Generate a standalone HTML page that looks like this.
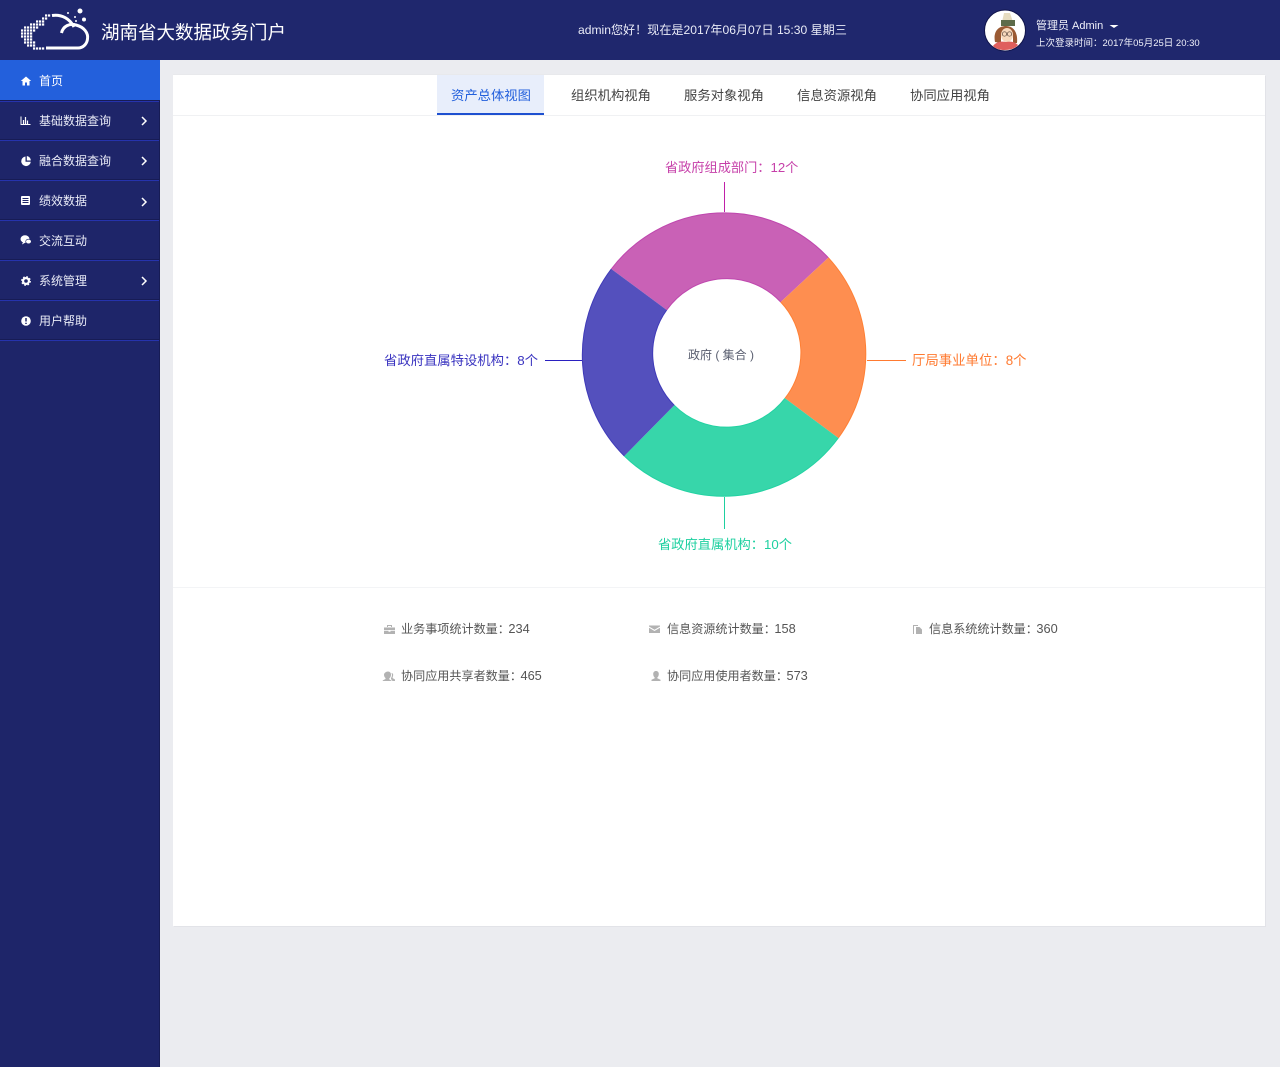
<!DOCTYPE html>
<html lang="zh-CN">
<head>
<meta charset="utf-8">
<title>湖南省大数据政务门户</title>
<style>
html,body{margin:0;padding:0;width:1280px;height:1067px;overflow:hidden;background:#ebecf0}
body{position:relative;font-family:"Liberation Sans","Noto Sans CJK SC",sans-serif}
.b{position:absolute}
.t{position:absolute;white-space:nowrap;line-height:20px;height:20px}
.n{color:#e9ebf7;font-size:12px}
.tab{color:#444;font-size:13.33px}
.s{color:#555;font-size:12.1px}
.d{margin-left:-1.5px;font-size:12.8px}
.l{font-size:13.33px}
svg{position:absolute;left:0;top:0}
</style>
</head>
<body>
<div class="b" style="left:0;top:0;width:1280px;height:60px;background:#1f276d"></div>
<div class="b" style="left:0;top:60px;width:159px;height:1007px;background:#1e2569;border-right:1px solid #171c55"></div>
<div class="b" style="left:0;top:60px;width:160px;height:39.500px;background:#2360dc"></div>
<div class="b" style="left:0;top:99.500px;width:159px;height:1px;background:#171c55"></div><div class="b" style="left:0;top:100.500px;width:159px;height:1px;background:#2633ad"></div>
<div class="b" style="left:0;top:139px;width:159px;height:1px;background:#171c55"></div><div class="b" style="left:0;top:140px;width:159px;height:1px;background:#2633ad"></div>
<div class="b" style="left:0;top:179px;width:159px;height:1px;background:#171c55"></div><div class="b" style="left:0;top:180px;width:159px;height:1px;background:#2633ad"></div>
<div class="b" style="left:0;top:219px;width:159px;height:1px;background:#171c55"></div><div class="b" style="left:0;top:220px;width:159px;height:1px;background:#2633ad"></div>
<div class="b" style="left:0;top:259px;width:159px;height:1px;background:#171c55"></div><div class="b" style="left:0;top:260px;width:159px;height:1px;background:#2633ad"></div>
<div class="b" style="left:0;top:299px;width:159px;height:1px;background:#171c55"></div><div class="b" style="left:0;top:300px;width:159px;height:1px;background:#2633ad"></div>
<div class="b" style="left:0;top:339px;width:159px;height:1px;background:#171c55"></div><div class="b" style="left:0;top:340px;width:159px;height:1px;background:#2633ad"></div>

<div class="b" style="left:173px;top:75px;width:1092px;height:851px;background:#fff;box-shadow:1px 1px 0 #e2e3e8,0 -1px 0 #e8e9ec"></div>
<div class="b" style="left:173px;top:115px;width:1092px;height:1px;background:#f0f1f3"></div>
<div class="b" style="left:437px;top:75px;width:107px;height:38px;background:#e8eefb;border-bottom:2px solid #1e50d0"></div>
<div class="b" style="left:173px;top:587px;width:1092px;height:1px;background:#f3f4f6"></div>

<svg width="1280" height="1067" viewBox="0 0 1280 1067" fill="none">
  <!-- logo -->
  <path d="M45 15.500h6M42 18.500h6M36 21.500h9M30 24.500h15M24 27.500h15M21 30.500h15M21 33.500h12M21 36.500h12M24 39.500h9M24 42.500h12M27 45.500h9M33 48.500h12" stroke="#fff" stroke-width="2.200" stroke-dasharray="2.200 .8"/>
  <path d="M52 15.500C62 14 70 19 74 27M61.500 33C63 26 70 23 76 25C84 27 88.500 33 87.500 39C87 44 83 48 78 48L46 48" stroke="#fff" stroke-width="3"/>
  <circle cx="80" cy="11" r="2.500" fill="#fff"/><circle cx="84" cy="19.500" r="2" fill="#fff"/><circle cx="75" cy="17" r="1" fill="#fff"/><circle cx="68" cy="13" r="1" fill="#fff"/><circle cx="76" cy="21" r="1" fill="#fff"/>
  <!-- avatar -->
  <circle cx="1005" cy="30.500" r="20.500" fill="#fff" stroke="#10144a" stroke-width="1"/>
  <path d="M1002 22L1004 13H1010L1013 22Z" fill="#e6dcc0"/>
  <path d="M1001 20h14v6h-14z" fill="#5d6b4a"/>
  <path d="M995 42C993 32 998 26 1006 26C1014 26 1018 33 1017 43L1013 43V36H1001V43Z" fill="#9a5a34"/>
  <ellipse cx="1007" cy="35" rx="6" ry="7" fill="#f7d9bd"/>
  <circle cx="1004.500" cy="34" r="2.200" stroke="#55433a" stroke-width=".7"/><circle cx="1009.500" cy="34" r="2.200" stroke="#55433a" stroke-width=".7"/>
  <path d="M993 46C996 42 1001 41 1006 42C1011 41 1015 42 1018 45C1014 51 998 52 993 46Z" fill="#df5f5d"/>
  <!-- caret -->
  <path d="M1109.500 25h9l-4.500 3z" fill="#fff"/>
  <!-- nav icons -->
  <path d="M26 76.500L20.800 81H22.500V85.500H25V82.500H27V85.500H29.500V81H31.200Z" fill="#fff"/>
  <path d="M21 116.500V124.500H30.500" stroke="#fff" stroke-width="1"/><path d="M23.500 120v4M25.500 117v7M27.500 120.500v3.500" stroke="#fff" stroke-width="1.200"/>
  <path d="M25.500 156.500A4.800 4.800 0 1 0 30.800 161.800H25.500Z" fill="#fff"/><path d="M26.800 156A4.500 4.500 0 0 1 30.800 160.500H26.800Z" fill="#fff"/>
  <rect x="21" y="196" width="9" height="9" rx="1" fill="#fff"/><path d="M22.500 198.500h6M22.500 200.500h6M22.500 202.500h6" stroke="#1e2569" stroke-width=".9"/>
  <ellipse cx="25" cy="239" rx="4.500" ry="3.800" fill="#fff"/><path d="M23 242L22 244.500L25.500 242.500Z" fill="#fff"/><ellipse cx="28.500" cy="241.500" rx="2.800" ry="2.300" fill="#fff" stroke="#1e2569" stroke-width=".6"/>
  <circle cx="26" cy="281" r="2.900" stroke="#fff" stroke-width="2.200"/><circle cx="26" cy="281" r="4.300" stroke="#fff" stroke-width="1.200" stroke-dasharray="1.700 1.700"/>
  <circle cx="26" cy="321" r="4.800" fill="#fff"/><path d="M26 318v3.500M26 322.700v1.300" stroke="#1e2569" stroke-width="1.500"/>
  <path d="M142 117l4 4-4 4M142 157l4 4-4 4M142 198l4 4-4 4M142 277l4 4-4 4" stroke="#fff" stroke-width="1.500"/>
  <!-- donut -->
  <path d="M611.300 269A142.300 142.300 0 0 1 828.300 257.700L780.700 302A73.500 73.500 0 0 0 666.700 310Z" fill="#c961b6"/>
  <path d="M828.300 257.700A142.300 142.300 0 0 1 838.300 438L785 398.300A73.500 73.500 0 0 0 780.700 302Z" fill="#fe8e50"/>
  <path d="M838.300 438A142.300 142.300 0 0 1 624.300 456L674.300 405.300A73.500 73.500 0 0 0 785 398.300Z" fill="#37d6aa"/>
  <path d="M624.300 456A142.300 142.300 0 0 1 611.300 269L666.700 310A73.500 73.500 0 0 0 674.300 405.300Z" fill="#5450bd"/>
  <path d="M611.300 269A142.300 142.300 0 0 1 828.300 257.700M780.700 302A73.500 73.500 0 0 0 666.700 310" stroke="#bf47ae" stroke-width="1"/>
  <path d="M828.300 257.700A142.300 142.300 0 0 1 838.300 438M785 398.300A73.500 73.500 0 0 0 780.700 302" stroke="#ff8035" stroke-width="1"/>
  <path d="M838.300 438A142.300 142.300 0 0 1 624.300 456M674.300 405.300A73.500 73.500 0 0 0 785 398.300" stroke="#22d2a2" stroke-width="1"/>
  <path d="M624.300 456A142.300 142.300 0 0 1 611.300 269M666.700 310A73.500 73.500 0 0 0 674.300 405.300" stroke="#3f3ab8" stroke-width="1"/>
  <path d="M724.500 182V212" stroke="#c020a8"/><path d="M724.500 497V529" stroke="#1ed0a0"/>
  <path d="M545 360.500H582" stroke="#2a20c0"/><path d="M867 360.500H906" stroke="#ff7a30"/>
  <!-- stat icons -->
  <g fill="#b2b2b2">
    <path d="M384 627.500h11v2.500h-11zM384 630.800h4.500v1h2v-1h4.500v3.200h-11zM387 627v-2h5v2h-1v-1h-3v1z"/>
    <path d="M649 625.500h11v1l-5.500 3.200-5.500-3.200zM649 627.800l5.500 3.200 5.500-3.200v5.200h-11z"/>
    <path d="M913 625h5v1h-4v8h-1zM916 627h3.500l2.500 2.500v4.500h-6z"/>
    <path d="M388 671.500c2 0 3 1.500 3 3.200s-1 3.300-1.800 3.800v.7l2.800 1.800h-9l-.500-.500 3-1.500v-1c-.8-.5-1.500-2-1.500-3.300 0-1.700 2-3.200 4-3.200zM392 673c1 .5 1.500 1.500 1 3l-.5 2 2.500 1.500v1.500h-2.500l-1.500-2 0-1c1-1 1.300-3.500.5-5z"/>
    <path d="M656 671c1.800 0 2.800 1.300 2.800 3s-.8 3-1.500 3.500v.8l3.200 1.500v1.200h-9v-1.200l3.200-1.500v-.8c-.7-.5-1.500-1.800-1.500-3.500s1-3 2.800-3z"/>
  </g>
</svg>

<div class="t" style="left:101px;top:23px;color:#fff;font-size:18.500px">湖南省大数据政务门户</div>
<div class="t" style="left:578px;top:20px;color:#e9ebf7;font-size:12.100px">admin您好！现在是2017年06月07日 15:30 星期三</div>
<div class="t" style="left:1036px;top:16px;color:#f0f1fa;font-size:11px">管理员 Admin</div>
<div class="t" style="left:1036px;top:34px;color:#f0f1fa;font-size:9.500px">上次登录时间：2017年05月25日 20:30</div>

<div class="t n" style="left:39px;top:71px;color:#fff">首页</div>
<div class="t n" style="left:39px;top:111px">基础数据查询</div>
<div class="t n" style="left:39px;top:151px">融合数据查询</div>
<div class="t n" style="left:39px;top:191px">绩效数据</div>
<div class="t n" style="left:39px;top:231px">交流互动</div>
<div class="t n" style="left:39px;top:271px">系统管理</div>
<div class="t n" style="left:39px;top:311px">用户帮助</div>

<div class="t tab" style="left:451px;top:86px;color:#2360dc">资产总体视图</div>
<div class="t tab" style="left:571px;top:86px">组织机构视角</div>
<div class="t tab" style="left:684px;top:86px">服务对象视角</div>
<div class="t tab" style="left:797px;top:86px">信息资源视角</div>
<div class="t tab" style="left:910px;top:86px">协同应用视角</div>

<div class="t l" style="left:665px;top:158px;color:#c63fa9;font-size:13.200px">省政府组成部门：12个</div>
<div class="t l" style="left:384px;top:351px;color:#3a34c0">省政府直属特设机构：8个</div>
<div class="t l" style="left:912px;top:351px;color:#ff7a30;font-size:13.400px">厅局事业单位：8个</div>
<div class="t l" style="left:658px;top:535px;color:#1ed0a0;font-size:13.250px">省政府直属机构：10个</div>
<div class="t" style="left:688px;top:345px;color:#5a5f70;font-size:12px">政府 ( 集合 )</div>

<div class="t s" style="left:401px;top:619px">业务事项统计数量：<span class="d">234</span></div>
<div class="t s" style="left:667px;top:619px">信息资源统计数量：<span class="d">158</span></div>
<div class="t s" style="left:929px;top:619px">信息系统统计数量：<span class="d">360</span></div>
<div class="t s" style="left:401px;top:666px">协同应用共享者数量：<span class="d">465</span></div>
<div class="t s" style="left:667px;top:666px">协同应用使用者数量：<span class="d">573</span></div>
</body>
</html>
